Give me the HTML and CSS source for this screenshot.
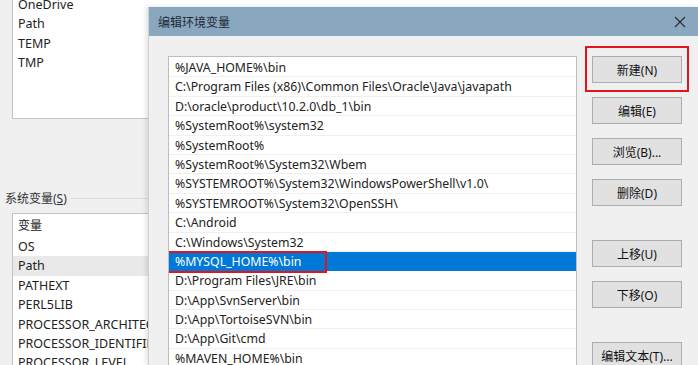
FILE: index.html
```html
<!DOCTYPE html>
<html lang="zh-CN">
<head>
  <meta charset="UTF-8" />
  <meta name="viewport" content="width=device-width, initial-scale=1.0" />
  <title>编辑环境变量</title>
  <link rel="stylesheet" href="styles.css">
</head>
<body>
  <div class="desktop">
    <section class="envwin">
      <ul class="varlist upper">
        <li>OneDrive</li>
        <li>Path</li>
        <li>TEMP</li>
        <li>TMP</li>
      </ul>

      <div class="group-title"><span>系统变量(<u>S</u>)</span></div>

      <ul class="varlist lower">
        <li class="head">变量</li>
        <li>OS</li>
        <li class="current">Path</li>
        <li>PATHEXT</li>
        <li>PERL5LIB</li>
        <li>PROCESSOR_ARCHITECTURE</li>
        <li>PROCESSOR_IDENTIFIER</li>
        <li>PROCESSOR_LEVEL</li>
      </ul>
    </section>

    <section class="dialog">
      <header class="titlebar">
        <span>编辑环境变量</span>
        <svg class="close" width="12" height="12" viewBox="0 0 12 12">
          <path d="M1 1 L11 11 M11 1 L1 11" stroke="#2b2b2b" stroke-width="1.1" fill="none" />
        </svg>
      </header>

      <div class="dialog-body">
        <ul class="pathlist">
          <li>%JAVA_HOME%\bin</li>
          <li>C:\Program Files (x86)\Common Files\Oracle\Java\javapath</li>
          <li>D:\oracle\product\10.2.0\db_1\bin</li>
          <li>%SystemRoot%\system32</li>
          <li>%SystemRoot%</li>
          <li>%SystemRoot%\System32\Wbem</li>
          <li>%SYSTEMROOT%\System32\WindowsPowerShell\v1.0\</li>
          <li>%SYSTEMROOT%\System32\OpenSSH\</li>
          <li>C:\Android</li>
          <li>C:\Windows\System32</li>
          <li class="selected"><span class="mark-text"></span>%MYSQL_HOME%\bin</li>
          <li>D:\Program Files\JRE\bin</li>
          <li>D:\App\SvnServer\bin</li>
          <li>D:\App\TortoiseSVN\bin</li>
          <li>D:\App\Git\cmd</li>
          <li>%MAVEN_HOME%\bin</li>
          <li>C:\Program Files\nodejs\</li>
        </ul>

        <div class="actions">
          <button class="marked">新建(N)</button>
          <button>编辑(E)</button>
          <button>浏览(B)...</button>
          <button>删除(D)</button>
          <button class="spaced">上移(U)</button>
          <button>下移(O)</button>
          <button class="spaced">编辑文本(T)...</button>
        </div>
      </div>
    </section>
  </div>
</body>
</html>
```

FILE: styles.css
```css
html, body {
  margin: 0;
  padding: 0;
}
body {
  width: 698px;
  height: 365px;
  overflow: hidden;
  background-color: #fff;
  color: #222;
  font-family: "Noto Sans", "Noto Sans CJK SC", sans-serif;
  font-size: 12px;
}
ul {
  list-style: none;
  margin: 0;
  padding: 0;
}

.desktop {
  display: flex;
  height: 365px;
}

/* background window: 环境变量 */
.envwin {
  width: 148px;
  flex-shrink: 0;
  background-color: #f0f0f0;
  padding-left: 12px;
  box-sizing: border-box;
}
.varlist {
  background-color: #fff;
  border: 1px solid #c4c4c4;
  border-right: none;
  white-space: nowrap;
  overflow: hidden;
  font-size: 12.5px;
}
.varlist li {
  height: 19.4px;
  line-height: 19.4px;
  padding-left: 5px;
}
.upper {
  margin-top: -6px;
  height: 123px;
}
.group-title {
  display: flex;
  align-items: center;
  height: 16px;
  margin: 71px 0 7px -7px;
  color: #333;
}
.group-title::after {
  content: "";
  flex: 1;
  margin-left: 4px;
  border-top: 1px solid #dcdcdc;
}
.lower {
  height: 160px;
}
.lower .head {
  height: 23px;
  line-height: 23px;
  font-size: 12px;
}
.lower .current {
  background-color: #e9e9e9;
}

/* dialog: 编辑环境变量 */
.dialog {
  flex: 1;
  margin-top: 7px;
  background-color: #f0f0f0;
  border-left: 1px solid #c9d3dc;
  box-shadow: -2px 0 5px rgba(0, 0, 0, 0.12);
  display: flex;
  flex-direction: column;
  position: relative;
}
.titlebar {
  height: 29px;
  flex-shrink: 0;
  background-color: #8aa7c0;
  display: flex;
  align-items: center;
  justify-content: space-between;
  padding: 0 12px 0 9px;
  color: #1e2a35;
}
.close {
  display: block;
}
.dialog-body {
  display: flex;
  gap: 15px;
  padding: 20px 0 0 19px;
}
.pathlist {
  width: 407px;
  height: 320px;
  flex-shrink: 0;
  background-color: #fff;
  border: 1px solid #bdbdbd;
  padding-top: 1px;
  overflow: hidden;
  font-size: 12.3px;
}
.pathlist li {
  height: 19.4px;
  line-height: 19.4px;
  padding-left: 6px;
  box-sizing: border-box;
  border-bottom: 1px solid #f0f0f0;
  white-space: nowrap;
  position: relative;
}
.pathlist .selected {
  background-color: #0078d7;
  border-bottom-color: #0078d7;
  color: #fff;
}
.mark-text {
  position: absolute;
  left: -3px;
  top: -1px;
  width: 157px;
  height: 18px;
  border: 2px solid #e3141c;
}

.actions {
  display: flex;
  flex-direction: column;
  gap: 14px;
  width: 90px;
}
.actions button {
  height: 27px;
  padding: 0;
  border: 1px solid #adadad;
  background-color: #e1e1e1;
  color: #111;
  font-family: inherit;
  font-size: 12px;
  position: relative;
}
.actions .spaced {
  margin-top: 20px;
}
.actions .marked::after {
  content: "";
  position: absolute;
  top: -11px;
  left: -8px;
  right: -8px;
  bottom: -10px;
  border: 2px solid #e3141c;
}
```
